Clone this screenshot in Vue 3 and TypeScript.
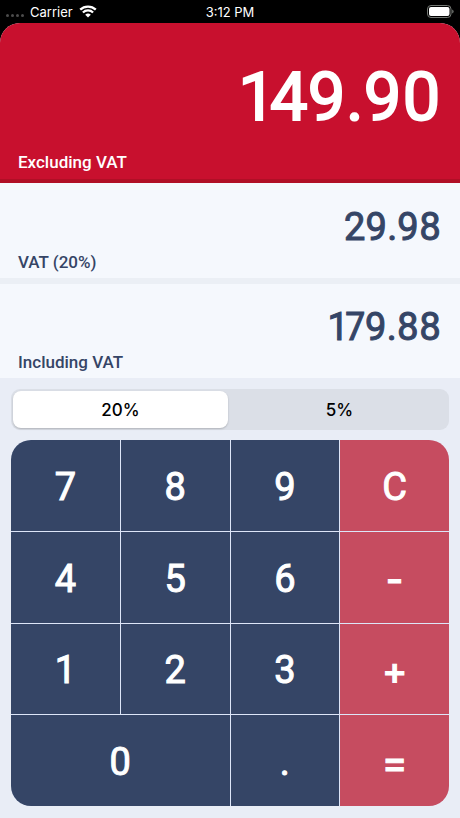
<script setup lang="ts">
import { computed, ref } from 'vue'

interface Key {
  label: string
  name: string
  kind: 'digit' | 'clear' | 'operator'
  wide?: boolean
}

const keys: Key[] = [
  { label: '7', name: 'Seven', kind: 'digit' },
  { label: '8', name: 'Eight', kind: 'digit' },
  { label: '9', name: 'Nine', kind: 'digit' },
  { label: 'C', name: 'Clear', kind: 'clear' },
  { label: '4', name: 'Four', kind: 'digit' },
  { label: '5', name: 'Five', kind: 'digit' },
  { label: '6', name: 'Six', kind: 'digit' },
  { label: '-', name: 'Subtract', kind: 'operator' },
  { label: '1', name: 'One', kind: 'digit' },
  { label: '2', name: 'Two', kind: 'digit' },
  { label: '3', name: 'Three', kind: 'digit' },
  { label: '+', name: 'Add', kind: 'operator' },
  { label: '0', name: 'Zero', kind: 'digit', wide: true },
  { label: '.', name: 'Decimal point', kind: 'digit' },
  { label: '=', name: 'Equals', kind: 'operator' },
]

const rates = [20, 5]
const rate = ref(20)
const entry = ref('149.90')
const fresh = ref(true)
const stored = ref<number | null>(null)
const operator = ref<'+' | '-' | null>(null)

const net = computed(() => Number(entry.value) || 0)
const vat = computed(() => ((net.value * rate.value) / 100).toFixed(2))
const gross = computed(() => (net.value * (1 + rate.value / 100)).toFixed(2))

function settle() {
  if (stored.value !== null && operator.value) {
    const sum = operator.value === '+' ? stored.value + net.value : stored.value - net.value
    entry.value = sum.toFixed(2)
  }
  stored.value = null
  operator.value = null
  fresh.value = true
}

function press(key: Key) {
  if (key.label === 'C') {
    entry.value = '0'
    stored.value = null
    operator.value = null
    fresh.value = true
  } else if (key.label === '+' || key.label === '-') {
    settle()
    stored.value = net.value
    operator.value = key.label
  } else if (key.label === '=') {
    settle()
  } else {
    const base = fresh.value ? '' : entry.value
    if (key.label === '.' && base.includes('.')) return
    entry.value = key.label === '.' && base === '' ? '0.' : base + key.label
    fresh.value = false
  }
}
</script>

<template>
  <div class="phone">
    <header class="status">
      <div class="carrier">
        <span class="dots" aria-hidden="true"><i></i><i></i><i></i><i></i></span>
        <span>Carrier</span>
        <svg class="wifi" viewBox="0 0 18 13" aria-hidden="true">
          <path d="M1.2 4.7a11.2 11.2 0 0 1 15.6 0" />
          <path d="M3.9 7.5a7.3 7.3 0 0 1 10.2 0" />
          <path class="core" d="M9 12.6 6.2 9.8a4 4 0 0 1 5.6 0z" />
        </svg>
      </div>
      <time class="clock">3:12 PM</time>
      <svg class="battery" viewBox="0 0 27 13" aria-hidden="true">
        <rect class="shell" x="0.5" y="0.5" width="23.5" height="12" rx="3.5" />
        <rect class="charge" x="2" y="2" width="20.5" height="9" rx="2" />
        <path class="tip" d="M25.2 4.5q1.4.6 1.4 2t-1.4 2z" />
      </svg>
    </header>

    <main class="app">
      <section class="panel primary">
        <output id="net" class="amount">{{ entry }}</output>
        <label for="net">Excluding VAT</label>
      </section>
      <section class="panel">
        <output id="vat" class="amount">{{ vat }}</output>
        <label for="vat">VAT ({{ rate }}%)</label>
      </section>
      <section class="panel">
        <output id="gross" class="amount">{{ gross }}</output>
        <label for="gross">Including VAT</label>
      </section>

      <div class="controls">
        <div class="segments" role="radiogroup" aria-label="VAT rate">
          <label v-for="r in rates" :key="r" class="segment" :class="{ selected: r === rate }">
            <input v-model="rate" type="radio" name="rate" :value="r" />
            <span>{{ r }}%</span>
          </label>
        </div>

        <div class="keypad">
          <button
            v-for="key in keys"
            :key="key.label"
            type="button"
            class="key"
            :class="[key.kind, { wide: key.wide }]"
            :aria-label="key.name"
            @click="press(key)"
          >
            {{ key.label }}
          </button>
        </div>
      </div>
    </main>
  </div>
</template>

<style>
body {
  background: #000;
}
</style>

<style scoped>
.phone {
  display: flex;
  flex-direction: column;
  min-height: 100vh;
  background: #000;
  font-family: Inter, Roboto, sans-serif;
}

.status {
  display: grid;
  grid-template-columns: 1fr auto 1fr;
  align-items: center;
  height: 23px;
  padding: 0 6px;
  color: #fff;
  font-size: 13px;
  line-height: 16px;
}

.carrier {
  display: flex;
  align-items: center;
  gap: 6px;
}

.dots {
  display: flex;
  gap: 2px;
  padding-top: 8px;
}

.dots i {
  width: 3px;
  height: 3px;
  border-radius: 50%;
  background: #4c4c4c;
}

.wifi {
  width: 18px;
  height: 13px;
  fill: none;
  stroke: #fff;
  stroke-width: 2.3;
}

.wifi .core {
  fill: #fff;
  stroke: none;
}

.battery {
  justify-self: end;
  width: 27px;
  height: 13px;
}

.shell {
  fill: none;
  stroke: #747874;
}

.charge {
  fill: #fff;
}

.tip {
  fill: #747874;
}

.app {
  flex: 1;
  display: flex;
  flex-direction: column;
  overflow: hidden;
  border-radius: 20px 20px 0 0;
  background: #e9edf6;
}

.panel {
  display: flex;
  flex-direction: column;
  gap: 1px;
  padding: 21px 19px 5px 18px;
  background: #f5f8fd;
  color: #354566;
}

.panel + .panel + .panel {
  padding-top: 20px;
  border-top: 6px solid #ebeff5;
}

.panel .amount {
  align-self: flex-end;
  font-family: Roboto, sans-serif;
  font-size: 38px;
  font-weight: 400;
  font-variant-numeric: proportional-nums;
  line-height: 46px;
  -webkit-text-stroke: 1px currentColor;
  stroke-linejoin: round;
}

.panel label {
  font-family: Roboto, sans-serif;
  font-size: 17px;
  font-weight: 500;
  line-height: 22px;
}

.panel.primary {
  gap: 4px;
  padding-top: 24px;
  padding-bottom: 6px;
  border-bottom: 4px solid #b00f26;
  background: #c8102e;
  color: #fff;
}

.primary .amount {
  font-size: 67px;
  line-height: 100px;
  -webkit-text-stroke-width: 2px;
}

.controls {
  flex: 1;
  display: flex;
  flex-direction: column;
  gap: 10px;
  padding: 11px 11px 12px;
}

.segments {
  display: grid;
  grid-template-columns: 1fr 1fr;
  gap: 4px;
  padding: 2px;
  border-radius: 9px;
  background: #dbdfe7;
}

.segment {
  display: flex;
  align-items: center;
  justify-content: center;
  height: 37px;
  border-radius: 8px;
  color: #000;
  font-size: 17px;
  font-weight: 500;
  cursor: pointer;
}

.segment.selected {
  background: #fff;
  box-shadow: 0 1px 2px rgba(0, 0, 0, 0.2);
}

.segment input {
  appearance: none;
  width: 0;
  height: 0;
  margin: 0;
}

.segment:focus-within {
  outline: 2px solid #354566;
}

.keypad {
  flex: 1;
  display: grid;
  grid-template-columns: repeat(4, 1fr);
  grid-auto-rows: minmax(56px, 1fr);
  gap: 1px;
  overflow: hidden;
  border-radius: 20px;
  background: #dde5f8;
}

.key {
  padding: 3px 0 0;
  border: 0;
  background: #354566;
  color: #fff;
  font-family: Roboto, sans-serif;
  font-size: 38px;
  font-weight: 400;
  line-height: 46px;
  -webkit-text-stroke: 1px currentColor;
  stroke-linejoin: round;
  cursor: pointer;
}

.key.clear,
.key.operator {
  background: #c64c60;
}

.key.operator {
  font-family: Inter, sans-serif;
  font-weight: 500;
}

.key.wide {
  grid-column: span 2;
}

.key:active {
  filter: brightness(1.15);
}
</style>
